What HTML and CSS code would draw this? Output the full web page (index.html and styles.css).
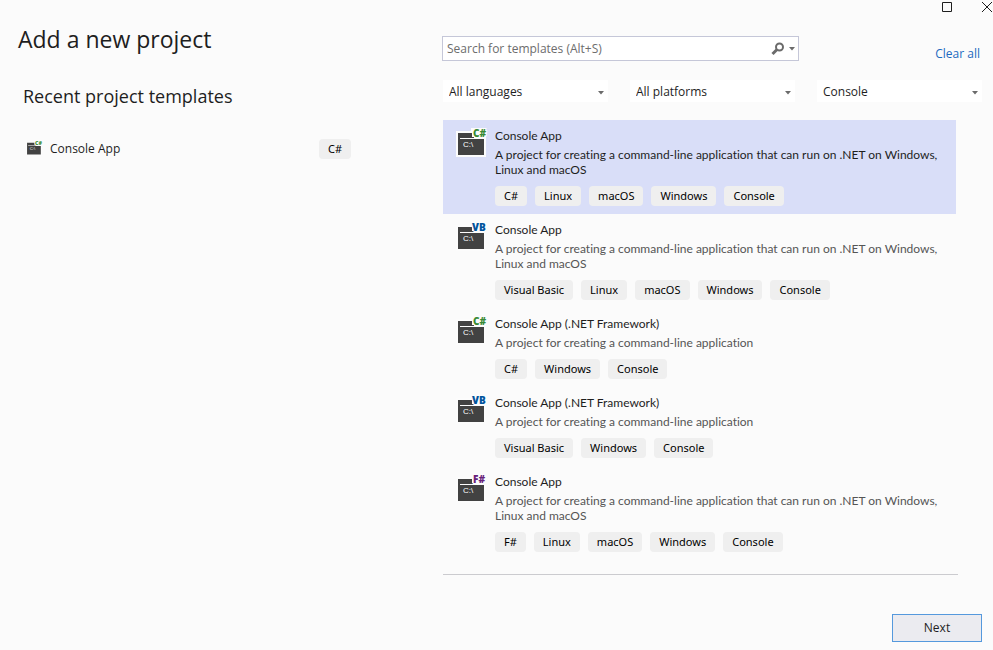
FILE: index.html
```html
<!DOCTYPE html>
<html lang="en">
<head>
<meta charset="utf-8">
<title>Add a new project</title>
<link rel="stylesheet" href="styles.css">
</head>
<body>
<svg class="defs" aria-hidden="true">
  <symbol id="console" viewBox="0 -4 34 34">
    <path class="halo" d="M0 3h15V0h15v29H0z"/>
    <path class="window" d="M2 5h14v4h2v2h10v16H2z"/>
    <path class="halo" d="M4 10h22v1H4z"/>
  </symbol>
  <symbol id="arrow" viewBox="0 0 6 4"><path d="M0 0h6L3 3.500z"/></symbol>
</svg>
<main class="dialog">
  <section class="recent">
    <h1>Add a new project</h1>
    <h2>Recent project templates</h2>
    <div class="recent-item">
      <svg class="icon-small" viewBox="0 -4 34 34" aria-hidden="true"><use href="#console" y="-4" width="34" height="34"/><text class="prompt" x="7" y="19">C:\</text><text class="lang cs" x="17" y="9">C#</text></svg>
      <span class="recent-name">Console App</span>
      <span class="tag">C#</span>
    </div>
  </section>
  <section class="browse">
    <div class="window-buttons">
      <button type="button" aria-label="Maximize"><svg viewBox="0 0 10 10"><path d="M.5.5h9v9h-9z"/></svg></button>
      <button type="button" aria-label="Close"><svg viewBox="0 0 10 10"><path d="M0 0l10 10M10 0L0 10"/></svg></button>
    </div>
    <div class="search-row">
      <div class="search">
        <input type="text" aria-label="Search for templates" placeholder="Search for templates (Alt+S)">
        <button type="button" aria-label="Search"><svg class="glass" viewBox="0 0 14 14"><circle cx="8.500" cy="5" r="3.500"/><path d="M6 7.500L1.500 12"/></svg></button>
        <button type="button" aria-label="Search options"><svg class="arrow"><use href="#arrow"/></svg></button>
      </div>
      <a class="clear" href="#">Clear all</a>
    </div>
    <div class="filters">
      <div class="filter"><select aria-label="Language"><option>All languages</option></select><svg class="arrow"><use href="#arrow"/></svg></div>
      <div class="filter"><select aria-label="Platform"><option>All platforms</option></select><svg class="arrow"><use href="#arrow"/></svg></div>
      <div class="filter"><select aria-label="Project type"><option>Console</option></select><svg class="arrow"><use href="#arrow"/></svg></div>
    </div>
    <ul class="templates">
      <li class="template selected">
        <svg class="icon" viewBox="0 -4 34 34" aria-hidden="true"><use href="#console" y="-4" width="34" height="34"/><text class="prompt" x="7" y="19">C:\</text><text class="lang cs" x="17" y="9">C#</text></svg>
        <div class="details">
          <h3>Console App</h3>
          <p>A project for creating a command-line application that can run on .NET on Windows, Linux and macOS</p>
          <div class="tags"><span class="tag">C#</span><span class="tag">Linux</span><span class="tag">macOS</span><span class="tag">Windows</span><span class="tag">Console</span></div>
        </div>
      </li>
      <li class="template">
        <svg class="icon" viewBox="0 -4 34 34" aria-hidden="true"><use href="#console" y="-4" width="34" height="34"/><text class="prompt" x="7" y="19">C:\</text><text class="lang vb" x="16" y="9">VB</text></svg>
        <div class="details">
          <h3>Console App</h3>
          <p>A project for creating a command-line application that can run on .NET on Windows, Linux and macOS</p>
          <div class="tags"><span class="tag">Visual Basic</span><span class="tag">Linux</span><span class="tag">macOS</span><span class="tag">Windows</span><span class="tag">Console</span></div>
        </div>
      </li>
      <li class="template">
        <svg class="icon" viewBox="0 -4 34 34" aria-hidden="true"><use href="#console" y="-4" width="34" height="34"/><text class="prompt" x="7" y="19">C:\</text><text class="lang cs" x="17" y="9">C#</text></svg>
        <div class="details">
          <h3>Console App (.NET Framework)</h3>
          <p>A project for creating a command-line application</p>
          <div class="tags"><span class="tag">C#</span><span class="tag">Windows</span><span class="tag">Console</span></div>
        </div>
      </li>
      <li class="template">
        <svg class="icon" viewBox="0 -4 34 34" aria-hidden="true"><use href="#console" y="-4" width="34" height="34"/><text class="prompt" x="7" y="19">C:\</text><text class="lang vb" x="16" y="9">VB</text></svg>
        <div class="details">
          <h3>Console App (.NET Framework)</h3>
          <p>A project for creating a command-line application</p>
          <div class="tags"><span class="tag">Visual Basic</span><span class="tag">Windows</span><span class="tag">Console</span></div>
        </div>
      </li>
      <li class="template">
        <svg class="icon" viewBox="0 -4 34 34" aria-hidden="true"><use href="#console" y="-4" width="34" height="34"/><text class="prompt" x="7" y="19">C:\</text><text class="lang fs" x="17" y="9">F#</text></svg>
        <div class="details">
          <h3>Console App</h3>
          <p>A project for creating a command-line application that can run on .NET on Windows, Linux and macOS</p>
          <div class="tags"><span class="tag">F#</span><span class="tag">Linux</span><span class="tag">macOS</span><span class="tag">Windows</span><span class="tag">Console</span></div>
        </div>
      </li>
    </ul>
    <div class="actions"><button class="next" type="button">Next</button></div>
  </section>
</main>
</body>
</html>
```
FILE: styles.css
```css
* { box-sizing: border-box; }
body {
  margin: 0;
  background: #fbfbfb;
  color: #1e1e1e;
  font: 12px/16px "Open Sans", "Noto Sans", sans-serif;
}
h1, h2, h3, p, ul { margin: 0; padding: 0; font-size: 12px; font-weight: 400; }
button, input, select { font: inherit; color: inherit; }
.defs { position: absolute; width: 0; height: 0; }

.dialog {
  display: grid;
  grid-template-columns: 442fr 551fr;
  min-height: 100vh;
}
.recent { padding: 23px 0 0 18px; }
.recent h1 { font-size: 23px; line-height: 32px; }
.recent h2 { margin: 29px 0 0 5px; font-size: 18px; line-height: 24px; }
.recent-item {
  display: flex;
  align-items: center;
  margin: 30px 91px 0 8px;
}
.recent-name { flex: 1; margin-left: 6px; }
.icon-small { width: 18px; height: 18px; margin-bottom: 4px; }

.browse {
  display: flex;
  flex-direction: column;
  padding: 0 11px 8px 0;
}
.window-buttons {
  display: flex;
  justify-content: flex-end;
  gap: 30px;
  margin-right: -10px;
  padding-top: 2px;
}
.window-buttons button,
.search button {
  display: flex;
  padding: 0;
  border: 0;
  background: none;
}
.window-buttons svg {
  width: 10px;
  height: 10px;
  fill: none;
  stroke: #1e1e1e;
  overflow: visible;
}
.search-row {
  display: grid;
  grid-template-columns: 2fr 1fr;
  margin-top: 24px;
}
.search {
  display: flex;
  align-items: center;
  gap: 4px;
  height: 25px;
  margin-right: 3px;
  padding: 0 3px 0 4px;
  border: 1px solid #c5c7d8;
  background: #fff;
}
.search input {
  flex: 1;
  min-width: 0;
  padding: 0;
  border: 0;
  outline: 0;
  background: none;
}
.search input::placeholder { color: #6d6d6d; opacity: 1; }
.glass {
  width: 14px;
  height: 14px;
  fill: none;
  stroke: #6b6b6b;
  stroke-width: 2;
}
.glass path { stroke-width: 3; }
.arrow { width: 6px; height: 4px; fill: #6b6b6b; }
.clear {
  align-self: flex-end;
  justify-self: end;
  margin-right: 2px;
  color: #1b6ac0;
  line-height: 14px;
  text-decoration: none;
}

.filters {
  display: grid;
  grid-template-columns: repeat(3, 1fr);
  gap: 22px;
  margin: 19px 0 0 1px;
}
.filter { position: relative; }
.filter select {
  width: 100%;
  height: 22px;
  padding: 1px 6px 0;
  border: 0;
  background: #fff;
  appearance: none;
}
.filter .arrow {
  position: absolute;
  top: 11px;
  right: 4px;
  pointer-events: none;
}

.templates {
  margin: 18px 24px 0 1px;
  padding-bottom: 14px;
  border-bottom: 1px solid #cbcbcf;
  list-style: none;
}
.template {
  display: flex;
  gap: 5px;
  margin-right: 2px;
  padding: 8px 8px 8px 13px;
}
.selected { background: #d9def8; }
.icon { flex: none; width: 34px; height: 34px; margin-top: -4px; }
.halo { fill: #fcfcfc; }
.window { fill: #424242; }
.prompt { fill: #fff; font: 8px "Liberation Sans", sans-serif; }
.lang {
  font: 900 10px "Noto Sans", sans-serif;
  stroke: #fcfcfc;
  stroke-width: 2px;
  paint-order: stroke;
}
.cs { fill: #388a34; }
.vb { fill: #00539c; }
.fs { fill: #68217a; }
.details { flex: 1; }
.details h3, .details p {
  font-family: Lato, "Open Sans", sans-serif;
  font-variant-ligatures: none;
}
.details p { margin-top: 3px; line-height: 15px; color: #555; }
.selected .details p { color: #1e1e1e; }
.tags { display: flex; gap: 8px; margin-top: 9px; }
.tag {
  padding: 0 9px;
  border-radius: 4px;
  background: #efefef;
  color: #000;
  font: 11px/20px "Noto Sans", sans-serif;
}

.actions {
  display: flex;
  justify-content: flex-end;
  margin-top: auto;
}
.next {
  width: 90px;
  height: 28px;
  border: 1px solid #5599dd;
  background: #ebebf0;
}
```
